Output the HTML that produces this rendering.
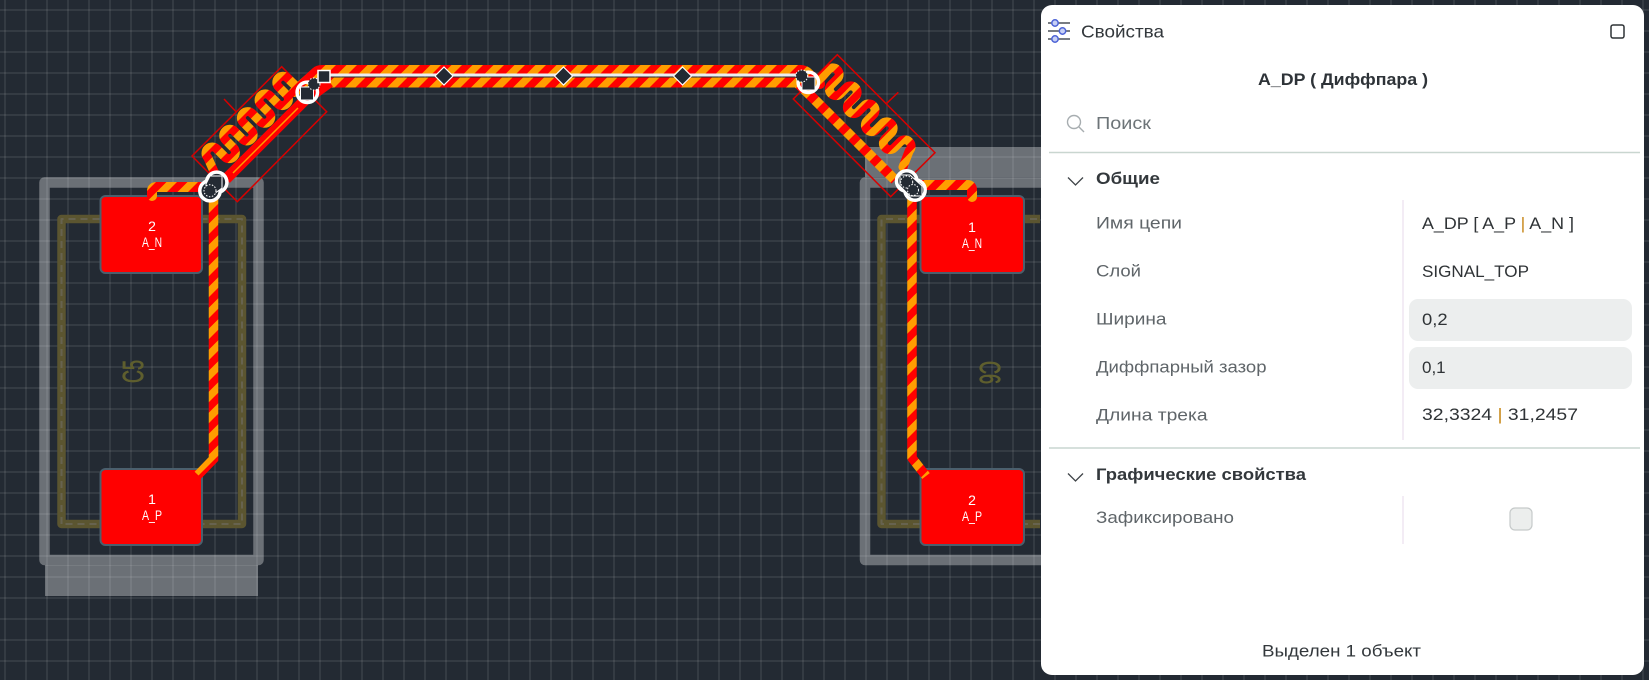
<!DOCTYPE html>
<html lang="ru">
<head>
<meta charset="utf-8">
<title>Свойства</title>
<style>
html,body{margin:0;padding:0;width:1649px;height:680px;overflow:hidden;background:#232a33}
svg{display:block;position:absolute;left:0;top:0}
.s{font-family:"Liberation Sans",sans-serif}
.l{font-size:17px;fill:#5f6569}
.v{font-size:17px;fill:#2f3336}
.b{font-size:17px;font-weight:bold;fill:#33383c}
</style>
</head>
<body>
<svg width="1649" height="680" viewBox="0 0 1649 680" xmlns="http://www.w3.org/2000/svg" class="s">
<defs>
<pattern id="grid" patternUnits="userSpaceOnUse" width="21" height="21" patternTransform="translate(4 9)">
<rect x="0" y="0" width="2" height="21" fill="#fff" fill-opacity=".08"/>
<rect x="0" y="0" width="21" height="2" fill="#fff" fill-opacity=".08"/>
</pattern>
<pattern id="st" patternUnits="userSpaceOnUse" width="21" height="21" patternTransform="translate(2 0)">
<rect width="21" height="21" fill="#ff0000"/>
<polygon points="0,10.5 10.5,0 21,0 0,21" fill="#ff9d00"/>
<polygon points="21,10.5 21,21 10.5,21" fill="#ff9d00"/>
</pattern>
</defs>
<rect width="1649" height="680" fill="#232a33"/>
<rect width="1649" height="680" fill="url(#grid)"/>

<!-- courtyards -->
<g fill="none" stroke="#fff" stroke-opacity=".33" stroke-width="10.5" stroke-linejoin="round">
<path d="M44.5 560V182.500H258.500V560Z"/>
<path d="M1100 560H865V182.500H1100"/>
</g>
<rect x="45" y="565" width="213" height="31" fill="#fff" fill-opacity=".33"/>
<rect x="865" y="147" width="180" height="30" fill="#fff" fill-opacity=".33"/>

<!-- silkscreen -->
<g fill="none" stroke-linejoin="round">
<path d="M61.500 524V219H242V524Z" stroke="#5b5530" stroke-width="8.500"/>
<path d="M61.500 524V219H242V524Z" stroke="#67634f" stroke-width="2" stroke-dasharray="7 5"/>
<path d="M1040 524H881.500V219H1040" stroke="#5b5530" stroke-width="8.500"/>
<path d="M1040 524H881.500V219H1040" stroke="#67634f" stroke-width="2" stroke-dasharray="7 5"/>
</g>
<text transform="translate(143 383) rotate(-90)" font-size="29" textLength="23" lengthAdjust="spacingAndGlyphs" fill="#5f5f2e" stroke="#5f5f2e" stroke-width=".8">C5</text>
<text transform="translate(980 361) rotate(90)" font-size="29" textLength="23" lengthAdjust="spacingAndGlyphs" fill="#5f5f2e" stroke="#5f5f2e" stroke-width=".8">C6</text>

<!-- pads -->
<g fill="#ff0000" stroke="#4b5f6d" stroke-width="2">
<rect x="100.500" y="196" width="101.500" height="77" rx="5"/>
<rect x="100.500" y="469" width="101.500" height="76" rx="5"/>
<rect x="920.500" y="196" width="103.500" height="77" rx="5"/>
<rect x="920.500" y="469" width="103.500" height="76" rx="5"/>
</g>
<g fill="#fff" font-size="14" text-anchor="middle">
<text x="152" y="231">2</text>
<text x="152" y="247" textLength="20" lengthAdjust="spacingAndGlyphs">A_N</text>
<text x="152" y="504">1</text>
<text x="152" y="520" textLength="20" lengthAdjust="spacingAndGlyphs">A_P</text>
<text x="972" y="232">1</text>
<text x="972" y="248" textLength="20" lengthAdjust="spacingAndGlyphs">A_N</text>
<text x="972" y="505">2</text>
<text x="972" y="521" textLength="20" lengthAdjust="spacingAndGlyphs">A_P</text>
</g>

<!-- meander bounding boxes -->
<g fill="none" stroke="#d80000" stroke-width="1.500">
<path d="M192 156L281.700 66.700L326.700 111.700L237.300 201.700Z"/>
<path d="M224 99L236 111.700"/>
<path d="M837.300 54.700L935 152.700L890.700 196.700L793.300 99Z"/>
<path d="M886.700 103.300L898.300 92.300"/>
</g>

<!-- traces -->
<g fill="none" stroke="url(#st)" stroke-width="9.500" stroke-linecap="round" stroke-linejoin="round">
<path d="M152 196V191Q152 187 157 187H210" stroke-width="10"/>
<path d="M213.500 190V459L198 475" stroke-linecap="butt" stroke-linejoin="miter"/>
<path d="M294 92L316 72Q318 70 322 70H800Q804 70 807 72L820 84" stroke-width="10"/>
<path d="M330 82.500H797L812 97L895 180" stroke-width="10" stroke-linecap="butt"/>
<path stroke-width="9" d="M216 176L207.830 157.680A6.250 6.250 0 0 1 216.680 148.830L224.680 156.830A6.250 6.250 0 0 0 233.530 147.980L225.530 139.980A6.250 6.250 0 0 1 234.380 131.130L242.380 139.130A6.250 6.250 0 0 0 251.230 130.280L243.230 122.280A6.250 6.250 0 0 1 252.080 113.430L260.080 121.430A6.250 6.250 0 0 0 268.930 112.580L260.930 104.580A6.250 6.250 0 0 1 269.780 95.730L277.780 103.730A6.250 6.250 0 0 0 286.630 94.880L278.630 86.880A6.250 6.250 0 0 1 287.480 78.030L300 90"/>
<path stroke-width="9" d="M816 84L828.250 69.750A6.360 6.360 0 0 1 837.250 78.750L831.250 84.750A6.360 6.360 0 0 0 840.250 93.750L846.250 87.750A6.360 6.360 0 0 1 855.250 96.750L849.250 102.750A6.360 6.360 0 0 0 858.250 111.750L864.250 105.750A6.360 6.360 0 0 1 873.250 114.750L867.250 120.750A6.360 6.360 0 0 0 876.250 129.750L882.250 123.750A6.360 6.360 0 0 1 891.250 132.750L885.250 138.750A6.360 6.360 0 0 0 894.250 147.750L900.250 141.750A6.360 6.360 0 0 1 909.250 150.750L903 167"/>
<path d="M912 190V458L926 476" stroke-linecap="butt" stroke-linejoin="round"/>
<path d="M905 185H967Q972 185 972 190V197" stroke-width="10"/>
</g>
<path d="M226 179L306 99" stroke="#ff0000" stroke-width="11" fill="none"/>
<path d="M233 173L298 108" stroke="#ff9d00" stroke-width="1.500" fill="none"/>
<path d="M306 100L330 82.500" stroke="#ff0000" stroke-width="10" fill="none"/>

<!-- centre line -->
<path d="M322 75H806" stroke="#eceef0" stroke-width="3" fill="none"/>

<!-- diamonds -->
<g fill="#232a33" stroke="#fff" stroke-width="1.200">
<path d="M444 67L453 76L444 85L435 76Z"/>
<path d="M563.500 67L572.500 76L563.500 85L554.500 76Z"/>
<path d="M682.500 67L691.500 76L682.500 85L673.500 76Z"/>
</g>

<!-- handles left top -->
<circle cx="307.300" cy="92.300" r="10.200" fill="none" stroke="#fff" stroke-width="3.500"/>
<rect x="300.500" y="87" width="13" height="13" fill="#232a33" stroke="#fff" stroke-width="1"/>
<circle cx="314" cy="84" r="6" fill="#232a33" stroke="#fff" stroke-width="1" stroke-dasharray="1.500 1.500"/>
<rect x="318" y="70.500" width="12" height="12" fill="#232a33" stroke="#fff" stroke-width="1.500"/>

<!-- handles left bottom -->
<circle cx="216.700" cy="182.300" r="10.200" fill="#232a33" stroke="#fff" stroke-width="3.500"/>
<circle cx="210" cy="190.700" r="10.200" fill="#232a33" stroke="#fff" stroke-width="3.500"/>
<path d="M210 176H222V188L214 194H206V184Z" fill="#232a33" stroke="#fff" stroke-width="1"/>
<circle cx="210" cy="190.700" r="6" fill="#232a33" stroke="#fff" stroke-width="1" stroke-dasharray="1.500 1.500"/>

<!-- handles right top -->
<circle cx="808.300" cy="82.300" r="10.200" fill="none" stroke="#fff" stroke-width="3.500"/>
<rect x="802" y="77" width="13" height="13" fill="#232a33" stroke="#fff" stroke-width="1"/>
<circle cx="801.700" cy="76" r="6" fill="#232a33" stroke="#fff" stroke-width="1" stroke-dasharray="1.500 1.500"/>

<!-- handles right bottom -->
<circle cx="906.700" cy="181" r="10.200" fill="#232a33" stroke="#fff" stroke-width="3.500"/>
<circle cx="915" cy="190" r="10.200" fill="#232a33" stroke="#fff" stroke-width="3.500"/>
<path d="M900 175H910L922 186V196H910L900 186Z" fill="#232a33" stroke="#fff" stroke-width="1"/>
<circle cx="906.700" cy="182" r="6" fill="#232a33" stroke="#fff" stroke-width="1" stroke-dasharray="1.500 1.500"/>
<circle cx="913" cy="190" r="5.500" fill="#232a33" stroke="#fff" stroke-width="1" stroke-dasharray="1.500 1.500"/>

<!-- panel -->
<rect x="1041" y="5" width="603" height="670" rx="11" fill="#fff"/>

<!-- header icon -->
<g fill="none">
<path d="M1048 23H1070M1048 31H1070M1048 39H1070" stroke="#4b5058" stroke-width="1.500"/>
<g stroke="#4d63d6" stroke-width="1.500" fill="#c7d0f5">
<circle cx="1055" cy="23" r="3.200"/>
<circle cx="1062.500" cy="31" r="3.200"/>
<circle cx="1055" cy="39" r="3.200"/>
</g>
</g>
<text x="1081" y="37.500" font-size="17.500" fill="#33383c" textLength="83" lengthAdjust="spacingAndGlyphs">Свойства</text>
<rect x="1611" y="25" width="13" height="13" rx="2" fill="none" stroke="#2f3336" stroke-width="1.500"/>

<text x="1258" y="85" class="b" textLength="170" lengthAdjust="spacingAndGlyphs" style="fill:#2e3338">A_DP ( Диффпара )</text>

<!-- search -->
<circle cx="1074" cy="122" r="6.500" fill="none" stroke="#a7adb0" stroke-width="1.400"/>
<path d="M1079 127L1084 132" stroke="#a7adb0" stroke-width="1.400"/>
<text x="1096" y="129" font-size="17.500" fill="#6d7478" textLength="55" lengthAdjust="spacingAndGlyphs">Поиск</text>

<path d="M1049 152.500H1640" stroke="#c9d6d0" stroke-width="1.500"/>

<path d="M1068 177.500L1075.500 185L1083 177.500" fill="none" stroke="#3f4448" stroke-width="1.300"/>
<text x="1096" y="184" class="b" textLength="64" lengthAdjust="spacingAndGlyphs">Общие</text>

<rect x="1402" y="200" width="2" height="240" fill="#f3ecf5"/>

<text x="1096" y="228.500" class="l" textLength="86" lengthAdjust="spacingAndGlyphs">Имя цепи</text>
<text x="1096" y="276.500" class="l" textLength="45" lengthAdjust="spacingAndGlyphs">Слой</text>
<text x="1096" y="324.500" class="l" textLength="70.500" lengthAdjust="spacingAndGlyphs">Ширина</text>
<text x="1096" y="372.500" class="l" textLength="170.500" lengthAdjust="spacingAndGlyphs">Диффпарный зазор</text>
<text x="1096" y="420.500" class="l" textLength="111.600" lengthAdjust="spacingAndGlyphs">Длина трека</text>

<rect x="1409" y="299" width="223" height="42" rx="9" fill="#eceeee"/>
<rect x="1409" y="347" width="223" height="42" rx="9" fill="#eceeee"/>

<text x="1422" y="229" class="v" textLength="152" lengthAdjust="spacingAndGlyphs">A_DP [ A_P <tspan fill="#c98a1e">|</tspan> A_N ]</text>
<text x="1422" y="277" class="v" textLength="107" lengthAdjust="spacingAndGlyphs">SIGNAL_TOP</text>
<text x="1422" y="325" class="v" textLength="25.600" lengthAdjust="spacingAndGlyphs">0,2</text>
<text x="1422" y="373" class="v">0,1</text>
<text x="1422" y="420" class="v" textLength="156" lengthAdjust="spacingAndGlyphs">32,3324 <tspan fill="#c98a1e">|</tspan> 31,2457</text>

<path d="M1049 448H1640" stroke="#c9d6d0" stroke-width="1.500"/>

<path d="M1068 473.500L1075.500 481L1083 473.500" fill="none" stroke="#3f4448" stroke-width="1.300"/>
<text x="1096" y="480" class="b" textLength="210" lengthAdjust="spacingAndGlyphs">Графические свойства</text>

<rect x="1402" y="496" width="2" height="48" fill="#f3ecf5"/>
<text x="1096" y="523" class="l" textLength="138" lengthAdjust="spacingAndGlyphs">Зафиксировано</text>
<rect x="1510" y="508" width="22" height="22" rx="5" fill="#eceeed" stroke="#c6caca" stroke-width="1.200"/>

<text x="1262" y="656.500" font-size="17" fill="#33383c" textLength="159" lengthAdjust="spacingAndGlyphs">Выделен 1 объект</text>
</svg>
</body>
</html>
